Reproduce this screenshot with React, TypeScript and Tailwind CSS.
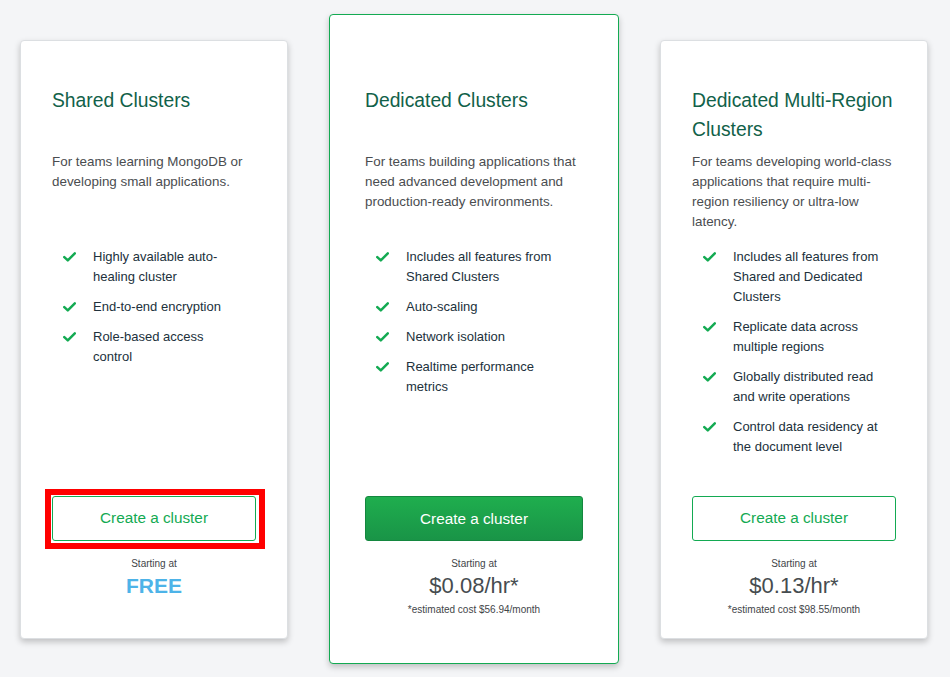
import React from "react";

type Plan = {
  title: string;
  desc: string;
  features: string[];
  featured?: boolean;
  price?: string;
  estimate?: string;
  free?: boolean;
  highlight?: boolean;
};

const plans: Plan[] = [
  {
    title: "Shared Clusters",
    desc: "For teams learning MongoDB or developing small applications.",
    features: ["Highly available auto-healing cluster", "End-to-end encryption", "Role-based access control"],
    free: true,
    highlight: true,
  },
  {
    title: "Dedicated Clusters",
    desc: "For teams building applications that need advanced development and production-ready environments.",
    features: ["Includes all features from Shared Clusters", "Auto-scaling", "Network isolation", "Realtime performance metrics"],
    featured: true,
    price: "$0.08/hr*",
    estimate: "*estimated cost $56.94/month",
  },
  {
    title: "Dedicated Multi-Region Clusters",
    desc: "For teams developing world-class applications that require multi-region resiliency or ultra-low latency.",
    features: [
      "Includes all features from Shared and Dedicated Clusters",
      "Replicate data across multiple regions",
      "Globally distributed read and write operations",
      "Control data residency at the document level",
    ],
    price: "$0.13/hr*",
    estimate: "*estimated cost $98.55/month",
  },
];

function Check() {
  return (
    <svg width="13" height="10" viewBox="0 0 13 10" className="shrink-0 mt-[5px]">
      <path d="M1.3 5.2 L4.8 8.4 L11.8 1.4" fill="none" stroke="#13aa52" strokeWidth="2.5" strokeLinecap="round" strokeLinejoin="round" />
    </svg>
  );
}

function Card({ p }: { p: Plan }) {
  const outer = p.featured
    ? "w-[290px] h-[650px] pt-[71px] pb-[47px] px-[35px] border-[#13aa52]"
    : "w-[268px] h-[599px] pt-[45px] pb-[22px] px-[31px] border-[#dcdfe2]";
  return (
    <div className={`flex flex-col shrink-0 bg-white border rounded-[4px] shadow-[0_3px_6px_rgba(0,0,0,0.22)] ${outer}`}>
      <h2 className="h-[58px] text-[19.3px] leading-[29px] text-[#116149] font-normal">{p.title}</h2>
      <p className="mt-[8px] min-h-[80px] text-[13.4px] leading-[20px] text-[#4a4d50]">{p.desc}</p>
      <ul className="mt-[15px] pl-[11px] pr-[12px] flex flex-col gap-[10px]">
        {p.features.map((f) => (
          <li key={f} className="flex items-start">
            <Check />
            <span className="ml-[17px] text-[13px] leading-[20px] text-[#21313c]">{f}</span>
          </li>
        ))}
      </ul>
      <div className="mt-auto h-[120px] flex flex-col items-center">
        <div className="relative w-full">
          {p.featured ? (
            <button className="w-full h-[45px] pt-[1px] rounded-[3px] border border-[#14873f] bg-gradient-to-b from-[#1fae4e] to-[#199447] text-white text-[15.3px]">
              Create a cluster
            </button>
          ) : (
            <button className="w-full h-[45px] pt-[1px] rounded-[3px] border border-[#13aa52] bg-white text-[#13aa52] text-[15.3px]">
              Create a cluster
            </button>
          )}
          {p.highlight && (
            <div className="absolute left-[-7px] top-[-7px] right-[-9px] bottom-[-8px] border-[6px] border-[#ff0000] pointer-events-none" />
          )}
        </div>
        <div className="mt-[16px] text-[10px] leading-[13px] text-[#3f4549]">Starting at</div>
        {p.free ? (
          <div className="mt-[3px] text-[21px] leading-[26px] font-bold text-[#4db3e8]">FREE</div>
        ) : (
          <>
            <div className="mt-[3px] text-[22px] leading-[26px] text-[#464c50]">{p.price}</div>
            <div className="mt-[4px] text-[10px] leading-[13px] text-[#3f4549]">{p.estimate}</div>
          </>
        )}
      </div>
    </div>
  );
}

export default function App() {
  return (
    <div className="w-[950px] h-[677px] bg-[#f4f5f7] overflow-hidden" style={{ fontFamily: '"Liberation Sans", Arial, sans-serif' }}>
      <div className="flex items-center gap-[41px] pl-[20px] pt-[14px]">
        {plans.map((p) => (
          <Card key={p.title} p={p} />
        ))}
      </div>
    </div>
  );
}
